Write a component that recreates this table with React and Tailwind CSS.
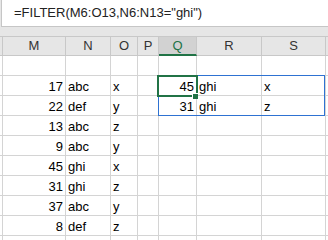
import React from 'react';

const cols = ['M', 'N', 'O', 'P', 'Q', 'R', 'S'];

// one entry per visible row under the header; null means empty cell
const rows = [
  ['', '', '', '', '', '', ''],
  ['17', 'abc', 'x', '', '45', 'ghi', 'x'],
  ['22', 'def', 'y', '', '31', 'ghi', 'z'],
  ['13', 'abc', 'z', '', '', '', ''],
  ['9', 'abc', 'y', '', '', '', ''],
  ['45', 'ghi', 'x', '', '', '', ''],
  ['31', 'ghi', 'z', '', '', '', ''],
  ['37', 'abc', 'y', '', '', '', ''],
  ['8', 'def', 'z', '', '', '', ''],
  ['', '', '', '', '', '', ''],
];

// number columns sit right, text columns sit left
const rightAligned = [true, false, false, false, true, false, false];

export default function App() {
  return (
    <div className="relative w-[328px] h-[240px] overflow-hidden bg-[#e6e6e6] font-['Liberation_Sans',Arial,sans-serif] text-black">
      {/* Formula bar */}
      <div className="ml-[1px] h-[27px] bg-white border-l border-b border-[#c6c6c6] pl-[12px] text-[13px] leading-[25px] text-[#222]">
        =FILTER(M6:O13,N6:N13="ghi")
      </div>

      <div className="h-[9px]" />

      {/* Column headers */}
      <div className="grid grid-cols-[3px_63px_45px_27px_21px_38px_65px_64px_1fr] h-[20px] border-t border-b border-[#c8c8c8] text-[13px] leading-[18px] text-[#333]">
        <div className="border-r border-[#c8c8c8]" />
        {cols.map((c) =>
          c === 'Q' ? (
            <div key={c} className="bg-[#d2d2d2] border-r border-[#c8c8c8] border-b-2 border-b-[#217346] text-center text-[#217346] leading-[17px]">
              {c}
            </div>
          ) : (
            <div key={c} className="border-r border-[#c8c8c8] text-center">
              {c}
            </div>
          )
        )}
        <div />
      </div>

      {/* Cells */}
      <div className="bg-white">
        {rows.map((r, i) => (
          <div key={i} className="grid grid-cols-[3px_63px_45px_27px_21px_38px_65px_64px_1fr] h-[20px] border-b border-[#d4d4d4] text-[13px]">
            <div className="border-r border-[#d4d4d4]" />
            {r.map((v, j) => (
              <div
                key={j}
                className={`border-r border-[#d4d4d4] flex items-end pb-[2px] leading-none whitespace-nowrap overflow-hidden ${rightAligned[j] ? 'justify-end pr-[2px]' : 'pl-[2px]'}`}
              >
                {v}
              </div>
            ))}
            <div />
          </div>
        ))}
      </div>

      {/* Spill range outline */}
      <div className="absolute left-[158px] top-[75px] w-[167px] h-[41px] border border-[#2e72d2]" />
      {/* Active cell */}
      <div className="absolute left-[157px] top-[75px] w-[41px] h-[22px] border-2 border-[#217346]" />
      {/* Fill handle */}
      <div className="absolute left-[192px] top-[93px] w-[6px] h-[6px] bg-[#217346] border-l border-t border-white" />
    </div>
  );
}
